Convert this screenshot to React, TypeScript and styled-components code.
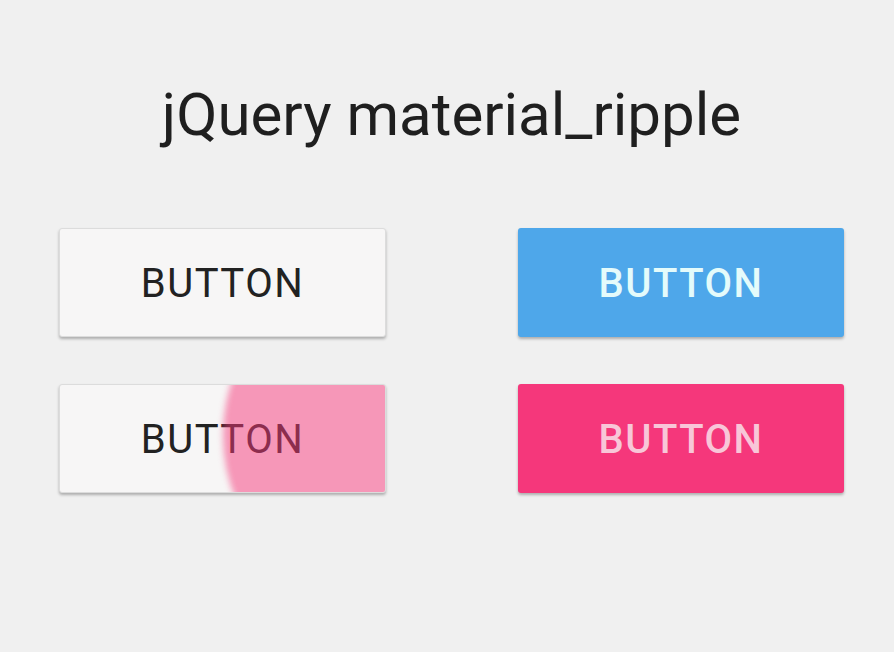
import React from "react";
import styled, { createGlobalStyle } from "styled-components";

const Global = createGlobalStyle`
  html, body {
    margin: 0;
    padding: 0;
    background: #f0f0f0;
  }
  body {
    font-family: Roboto, "Noto Sans", "Liberation Sans", sans-serif;
  }
`;

const Page = styled.div`
  width: 894px;
  height: 652px;
  box-sizing: border-box;
  padding: 80px 50px 0 59px;
  display: flex;
  flex-direction: column;
  align-items: stretch;
`;

const Title = styled.h1`
  margin: 0;
  font-family: Roboto, sans-serif;
  font-weight: 400;
  font-size: 60px;
  line-height: 70px;
  color: #1f1f1f;
  text-align: center;
  width: 785px;
`;

const Grid = styled.div`
  margin-top: 78px;
  display: grid;
  grid-template-columns: 327px 326px;
  column-gap: 132px;
  row-gap: 47px;
  width: 785px;
`;

const Button = styled.button<{ $variant: "plain" | "blue" | "pink" }>`
  position: relative;
  overflow: hidden;
  height: 109px;
  border-radius: 3px;
  font-family: Roboto, sans-serif;
  font-size: 40px;
  letter-spacing: 1.5px;
  font-weight: ${(p) => (p.$variant === "plain" ? 400 : 500)};
  cursor: pointer;
  padding: 0;
  display: flex;
  align-items: center;
  justify-content: center;
  background: ${(p) =>
    p.$variant === "blue" ? "#4ea7ea" : p.$variant === "pink" ? "#f5377b" : "#f7f6f6"};
  color: ${(p) =>
    p.$variant === "blue" ? "#e4fbfb" : p.$variant === "pink" ? "#f8c6d8" : "#222222"};
  border: ${(p) => (p.$variant === "plain" ? "1px solid #dcdcdc" : "none")};
  box-shadow: 0 2px 3px rgba(0, 0, 0, 0.28);
`;

const Label = styled.span`
  position: relative;
  top: 1px;
`;

const Ripple = styled.span`
  position: absolute;
  left: 163px;
  top: -120px;
  width: 340px;
  height: 340px;
  border-radius: 50%;
  background: rgba(245, 56, 122, 0.5);
  filter: blur(3px);
  pointer-events: none;
`;

export default function App() {
  return (
    <>
      <Global />
      <Page>
        <Title>jQuery material_ripple</Title>
        <Grid>
          <Button $variant="plain">
            <Label>BUTTON</Label>
          </Button>
          <Button $variant="blue">
            <Label>BUTTON</Label>
          </Button>
          <Button $variant="plain">
            <Label>BUTTON</Label>
            <Ripple />
          </Button>
          <Button $variant="pink">
            <Label>BUTTON</Label>
          </Button>
        </Grid>
      </Page>
    </>
  );
}
